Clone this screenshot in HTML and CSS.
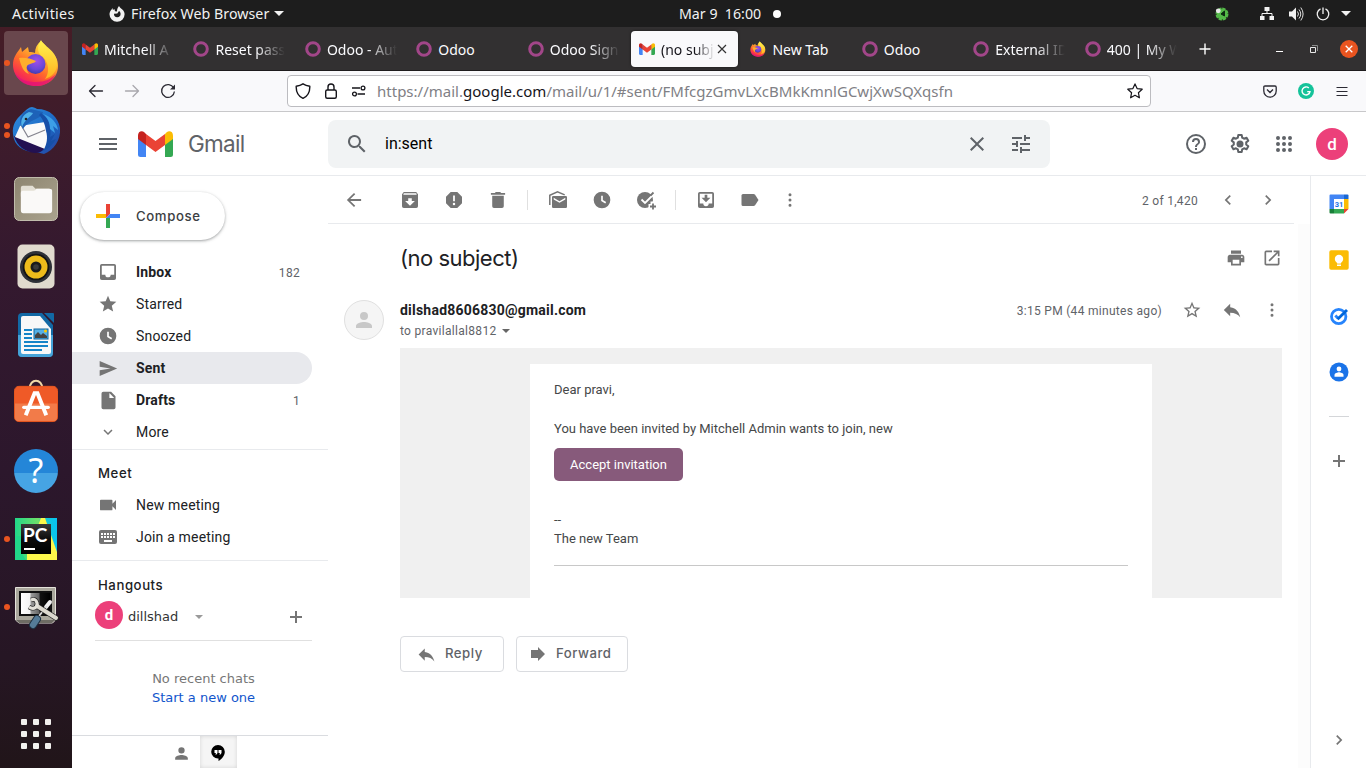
FILE: index.html
```html
<!DOCTYPE html>
<html lang="en">
<head>
<meta charset="utf-8">
<title>(no subject) - Gmail</title>
<link rel="stylesheet" href="styles.css">
</head>
<body>
<svg class="sprite" aria-hidden="true">
  <defs>
    <linearGradient id="ffBody" x1="0.85" y1="0.05" x2="0.25" y2="1">
      <stop offset="0" stop-color="#fff04f"/><stop offset=".3" stop-color="#ffb52e"/><stop offset=".6" stop-color="#ff6a2b"/><stop offset=".85" stop-color="#f9304e"/><stop offset="1" stop-color="#e01c7c"/>
    </linearGradient>
    <radialGradient id="ffGlobe" cx=".55" cy=".35" r=".7">
      <stop offset="0" stop-color="#a24ee8"/><stop offset=".6" stop-color="#6a48d8"/><stop offset="1" stop-color="#3a3aa8"/>
    </radialGradient>
    <linearGradient id="ffTop" x1="0" y1="0" x2="0" y2="1"><stop offset="0" stop-color="#fff34f"/><stop offset="1" stop-color="#ffb21f"/></linearGradient>
    <linearGradient id="tbBlue" x1="0" y1="0" x2="1" y2="1"><stop offset="0" stop-color="#2f8fe0"/><stop offset=".6" stop-color="#1c68c4"/><stop offset="1" stop-color="#27409c"/></linearGradient>
    <linearGradient id="tan" x1="0" y1="0" x2="1" y2="1"><stop offset="0" stop-color="#8d8570"/><stop offset="1" stop-color="#aaa38e"/></linearGradient>
    <linearGradient id="pcBg" x1="0" y1="0" x2="1" y2="0"><stop offset="0" stop-color="#21d789"/><stop offset=".55" stop-color="#6fe16a"/><stop offset=".75" stop-color="#12c9d8"/><stop offset="1" stop-color="#07c3f2"/></linearGradient>
    <linearGradient id="pcDark" x1="0" y1="0" x2="0" y2="1"><stop offset="0" stop-color="#3a3a3a"/><stop offset=".5" stop-color="#0c0c0c"/><stop offset="1" stop-color="#000"/></linearGradient>
    <linearGradient id="mono" x1="0" y1="0" x2="1" y2="0"><stop offset="0" stop-color="#fff"/><stop offset=".3" stop-color="#f4f4f4"/><stop offset=".36" stop-color="#999"/><stop offset=".62" stop-color="#666"/><stop offset=".66" stop-color="#111"/><stop offset="1" stop-color="#000"/></linearGradient>
  </defs>
  <symbol id="firefox" viewBox="0 0 48 48">
    <path fill="url(#ffBody)" d="M29 2c5 4 7 8 9 11 6 3 8 8 8 14 0 12-10 20-22 20S1 38 1 26C1 19 4 15 7 11l2-3 1 5c2-2 4-3 6-5l1 5c3 0 4 0 6 1 0-5 2-9 6-12z"/>
    <path fill="#e2127a" d="M3 34c5 7 12 9 21 9 9 0 15-3 20-8-4 8-11 12-20 12S6 43 3 34z" opacity=".75"/>
    <path fill="url(#ffTop)" d="M29 1c2 6 15 10 16 22 1 10-6 15-12 17 4-5 5-15-2-22-5-3-7-9-2-17z"/>
    <circle cx="23.500" cy="25" r="10" fill="url(#ffGlobe)"/>
    <path fill="#ffad2d" d="M7 19c4-1 12 0 17 3-2 3-7 2-9 5-1 2 0 5 2 8-6-2-8-9-10-16z"/>
  </symbol>
  <symbol id="ffmono" viewBox="0 0 16 16"><path fill="#f2f2f2" fill-rule="evenodd" d="M10 0c.6 1.500 2.200 2.400 3.300 3.600C14.800 5 15.600 6.500 15.600 8.300A7.500 7.500 0 0 1 8 15.800 7.500 7.500 0 0 1 .5 8.300C.5 6.300 1.300 4.700 2.600 3.400L3.400 2l.5 2 1.500-.9L6 5.200l2 .3C8 3.500 8.700 1.400 10 0zM5 7.800a3.300 3.300 0 0 0 6.600.3c0-1.300-.6-2.300-1.600-3L8.300 7.400z"/></symbol>
  <symbol id="gmail" viewBox="0 0 35 26">
    <path fill="#4285f4" d="M0 5h8v21H2.500A2.500 2.500 0 0 1 0 23.500z"/>
    <path fill="#34a853" d="M27 5h8v18.500a2.500 2.500 0 0 1-2.500 2.500H27z"/>
    <path fill="#fbbc04" d="M27 3l1.500-1.500C31-1 35 .2 35 4.500v3.500l-8 6z"/>
    <path fill="#ea4335" d="M8 14V3l9.500 7L27 3v11l-9.500 7z"/>
    <path fill="#c5221f" d="M0 4.500C0 .2 4-1 6.500 1.500L8 3v11L0 8z"/>
  </symbol>
  <symbol id="ring" viewBox="0 0 16 16"><circle cx="8" cy="8" r="6.300" fill="none" stroke="#a24689" stroke-width="3"/></symbol>
  <symbol id="back" viewBox="0 0 16 16"><path fill="none" stroke="currentColor" stroke-width="1.300" stroke-linecap="round" stroke-linejoin="round" d="M14.500 8H1.500M7 2.500L1.500 8 7 13.500"/></symbol>
  <symbol id="star" viewBox="0 0 24 24"><path fill="currentColor" d="M12 17.270L18.180 21l-1.640-7.030L22 9.240l-7.190-.61L12 2 9.190 8.630 2 9.240l5.460 4.730L5.820 21z"/></symbol>
  <symbol id="clock" viewBox="0 0 24 24"><path fill="currentColor" fill-rule="evenodd" d="M12 2a10 10 0 1 0 0 20 10 10 0 0 0 0-20zm-1 5h2v5l4 2.500-1.100 1.700L11 13.200z"/></symbol>
  <symbol id="person" viewBox="0 0 24 24"><path fill="currentColor" d="M12 12a4 4 0 1 0 0-8 4 4 0 0 0 0 8zm0 2c-2.700 0-8 1.300-8 4v2h16v-2c0-2.700-5.300-4-8-4z"/></symbol>
  <symbol id="reply" viewBox="0 0 24 24"><path fill="currentColor" d="M10 9V5l-7 7 7 7v-4.100c5 0 8.500 1.600 11 5.100-1-5-4-10-11-11z"/></symbol>
  <symbol id="dots" viewBox="0 0 24 24"><path fill="currentColor" d="M12 7.600a1.800 1.800 0 1 0 0-3.600 1.800 1.800 0 0 0 0 3.600zm0 2.600a1.800 1.800 0 1 0 0 3.600 1.800 1.800 0 0 0 0-3.600zm0 6.200a1.800 1.800 0 1 0 0 3.600 1.800 1.800 0 0 0 0-3.600z"/></symbol>
  <symbol id="left" viewBox="0 0 24 24"><path fill="currentColor" d="M15.410 7.410L14 6l-6 6 6 6 1.410-1.410L10.830 12z"/></symbol>
  <symbol id="right" viewBox="0 0 24 24"><path fill="currentColor" d="M10 6L8.590 7.410 13.170 12l-4.580 4.590L10 18l6-6z"/></symbol>
  <symbol id="plus" viewBox="0 0 20 20"><path fill="currentColor" d="M16 11h-5v5H9v-5H4V9h5V4h2v5h5z"/></symbol>
</svg>

<header class="topbar">
  <span class="ub activities">Activities</span>
  <span class="app"><svg width="16" height="16"><use href="#ffmono"/></svg><span class="ub appname">Firefox Web Browser</span><i class="tri"></i></span>
  <span class="ub date">Mar 9&nbsp; 16:00</span><i class="dot"></i>
  <div class="status">
    <svg width="14" height="14" viewBox="0 0 14 14"><circle cx="7" cy="7" r="5.300" fill="#54b948" stroke="#54b948" stroke-width="2.400" stroke-dasharray="3.300 .8"/><path d="M6 7l3.500-3v5z" fill="#0d2b12" stroke="#0d2b12"/><circle cx="3.300" cy="3.800" r="2.400" fill="#e8e8e8"/></svg>
    <svg class="s-net" width="16" height="14" viewBox="0 0 16 14"><path fill="#f2f2f2" d="M5.500 0h5v4h-5zM1 9h4.500v4H1zM10.500 9H15v4h-4.500z"/><path d="M8 4v2.500M3 9V6.500h10V9" stroke="#f2f2f2" fill="none"/></svg>
    <svg class="s-vol" width="16" height="16" viewBox="0 0 16 16"><path fill="#f2f2f2" d="M1 5.500h3l4-4v13l-4-4H1z"/><path d="M9.500 5.500q2 2.500 0 5M11 3.500q3.500 4.500 0 9M12.800 1.500q4.600 6.500 0 13" stroke="#ddd" fill="none"/></svg>
    <svg class="s-pow" width="14" height="14" viewBox="0 0 14 14"><path d="M4.500 1.800a5.800 5.800 0 1 0 5 0M7 .5v6.500" stroke="#f2f2f2" stroke-width="1.300" fill="none"/></svg>
    <i class="tri"></i>
  </div>
</header>

<div class="desktop">
<nav class="dock">
  <div class="tile active"><i class="run"></i><svg width="48" height="48"><use href="#firefox"/></svg></div>
  <div class="tile"><i class="run"></i><i class="run second"></i>
    <svg width="50" height="48" viewBox="0 0 50 48"><path fill="url(#tbBlue)" d="M11 7C15 3 18 0 21 0c3 1 4 1 5 2 13 0 21 8 23 19 1 12-6 22-16 26l-8-2C12 45 3 39 2 27 1 18 5 12 11 7z"/><path fill="#231152" d="M3 29l31 12c-2 3-6 5-10 5C14 45 6 39 3 29z"/><path fill="#fafafa" d="M9 19l25-4 4 15-4 12L4 30z"/><path d="M10 18l7 12 17-7" fill="none" stroke="#84848f" stroke-width="1.200"/><path fill="#1d62b8" d="M10 18c-3-7 2-14 10-16l12 3c-2 8-14 7-20 17z"/><path fill="#51b2e8" d="M11 20c-2-6 0-12 7-15l4 1c-2 4-8 6-11 14z"/><circle cx="15" cy="12" r="1.300" fill="#222"/><path fill="#164fa8" d="M30 6c9 6 11 15 9 24l5-3-4 7 5-2c-4 7-8 10-13 12 4-7 5-13 3-20-1-7-3-12-7-16z"/><path fill="#3c9ee6" d="M32 7c9 3 14 9 15 16l-5-4 2 7-5-4c0-6-2-11-7-15z"/></svg></div>
  <div class="tile"><svg width="44" height="44" viewBox="0 0 45 45"><rect x=".5" y=".5" width="44" height="44" rx="5" fill="url(#tan)" stroke="#c4bfae"/><path fill="#e3dfd4" d="M7 11q0-2 2-2h10l3 3h14q2 0 2 2v6H7z"/><path fill="#faf9f8" d="M7 16q0-2 2-2h11q2 0 3-2h13q3 0 3 2v20q0 3-3 3H9.500Q7 37 7 34z"/></svg></div>
  <div class="tile"><svg width="38" height="46" viewBox="0 0 38 46"><rect x=".5" y=".5" width="37" height="44" rx="5" fill="#e0dace"/><circle cx="19" cy="23" r="16" fill="#2e3138"/><circle cx="19" cy="23" r="13.300" fill="#141414"/><circle cx="19" cy="23" r="11.500" fill="#edbb1b"/><circle cx="19" cy="23" r="5.500" fill="#1b1b1b"/><circle cx="19" cy="23" r="2.800" fill="#3a3a3a"/></svg></div>
  <div class="tile"><svg width="38" height="46" viewBox="0 0 38 46"><path fill="#1269a5" d="M5 1h20l11 12v28q0 4-4 4H5q-4 0-4-4V5q0-4 4-4z"/><path fill="#45a3d8" d="M1 23h35v18q0 4-4 4H5q-4 0-4-4z"/><path fill="#1269a5" d="M27 1h9q1 0 1 1v9z"/><path fill="#f8f8f8" d="M6 4h17l11 13v23q0 2-2 2H6q-2 0-2-2V6q0-2 2-2z"/><path stroke="#1584c8" stroke-width="2" d="M7 18h8M7 22h8M7 26h8M7 30h24M7 34h24M7 38h18"/><rect x="17" y="17" width="14" height="10" fill="#55b0e6" stroke="#0f669f"/><path fill="#444" d="M18 26v-3l3-3 3 3 2-2 4 3v2z"/><circle cx="28.500" cy="19" r="1.500" fill="#ffc800"/></svg></div>
  <div class="tile software"><svg width="44" height="45" viewBox="0 0 45 46"><path d="M16 10C16-1 29-1 29 10" fill="none" stroke="#efd9a8" stroke-width="2"/><rect x=".5" y="7.500" width="44" height="36" rx="4.500" fill="#ef5a27" stroke="#e9581f"/><path fill="#f27b49" d="M1 25h43v14q0 4-4 4H5q-4 0-4-4z"/><g stroke="#fff" fill="none"><path d="M12 37l9-22.500h3L33 37" stroke-width="4"/><path d="M10 29h25" stroke-width="3.500" stroke-linecap="round"/></g></svg></div>
  <div class="tile"><span class="helpball">?</span></div>
  <div class="tile"><i class="run"></i><div class="pycharm"><svg width="42" height="42" viewBox="0 0 42 42"><rect width="42" height="42" fill="url(#pcBg)"/><path fill="#fcf84a" d="M26 0h4l12 34v8H12V36L22 10z"/><path fill="#21d789" d="M0 18h7v18l4 6H0z"/><rect x="6" y="6" width="30" height="30" fill="url(#pcDark)"/><path fill="#fff" d="M9 30h11v2H9z"/></svg><span>PC</span></div></div>
  <div class="tile"><i class="run"></i><svg width="46" height="46" viewBox="0 0 46 46"><path fill="#a9a79c" stroke="#e4e2da" d="M2.500 3.500h40V36l-3 3H6l-3.500-3z"/><path fill="#6e6c64" d="M3 36h39l-3 3H6z"/><rect x="6" y="7" width="33" height="25" fill="#111"/><rect x="8" y="9" width="29" height="21" fill="url(#mono)"/><path stroke="#f2f2f2" stroke-width="4" stroke-linecap="round" d="M37 18l-4 5"/><path stroke="#ddd" stroke-width="2" d="M34 22l-8 10"/><path stroke="#222" stroke-width="5.500" stroke-linecap="round" d="M24 22l19 12"/><path fill="none" stroke="#222" stroke-width="4.600" d="M16 23c5 3 9 0 8-4s-3-4-6-3"/><path stroke="#dcd9cf" stroke-width="4" stroke-linecap="round" d="M24 22l19 12"/><path fill="none" stroke="#e4e2da" stroke-width="3.200" d="M16 23c5 3 9 0 8-4s-3-4-6-3"/><path stroke="#1d3042" stroke-width="8" stroke-linecap="round" d="M24 35l-4 6"/><path stroke="#557b98" stroke-width="6" stroke-linecap="round" d="M24 35l-4 6"/></svg></div>
  <div class="apps"><i></i><i></i><i></i><i></i><i></i><i></i><i></i><i></i><i></i></div>
</nav>

<div class="window">
  <div class="tabs">
    <div class="tab"><svg class="fav" viewBox="0 0 35 26"><use href="#gmail"/></svg><span class="ub">Mitchell A</span></div>
    <div class="tab"><svg class="fav"><use href="#ring"/></svg><span class="ub">Reset pass</span></div>
    <div class="tab"><svg class="fav"><use href="#ring"/></svg><span class="ub">Odoo - Aut</span></div>
    <div class="tab"><svg class="fav"><use href="#ring"/></svg><span class="ub short">Odoo</span></div>
    <div class="tab"><svg class="fav"><use href="#ring"/></svg><span class="ub">Odoo Sign</span></div>
    <div class="tab current"><svg class="fav" viewBox="0 0 35 26"><use href="#gmail"/></svg><span class="ub">(no subj</span><svg class="x" width="10" height="10" viewBox="0 0 10 10"><path d="M1 1l8 8M9 1L1 9" stroke="#333" stroke-width="1.200"/></svg></div>
    <div class="tab"><svg class="fav"><use href="#firefox"/></svg><span class="ub short">New Tab</span></div>
    <div class="tab"><svg class="fav"><use href="#ring"/></svg><span class="ub short">Odoo</span></div>
    <div class="tab"><svg class="fav"><use href="#ring"/></svg><span class="ub">External ID</span></div>
    <div class="tab"><svg class="fav"><use href="#ring"/></svg><span class="ub">400 | My W</span></div>
    <svg class="newtab" width="12" height="12" viewBox="0 0 12 12"><path d="M6 .5v11M.5 6h11" stroke="#fff" stroke-width="1.400"/></svg>
    <div class="winctl"><svg width="8" height="9" viewBox="0 0 8 9"><path d="M0 7.500h7" stroke="#fff"/></svg><svg width="8" height="8" viewBox="0 0 8 8"><path fill="none" stroke="#e8e8e8" d="M.5 2.500h5v5h-5z"/><path fill="none" stroke="#8c8c8c" d="M2 .5h5.500V6"/></svg><span class="close"><svg width="8" height="8" viewBox="0 0 8 8"><path d="M.7.7l6.600 6.600M7.300.7L.7 7.300" stroke="#fff" stroke-width="1.300"/></svg></span></div>
  </div>

  <div class="navbar">
    <svg class="n-back" width="16" height="16"><use href="#back"/></svg>
    <svg class="n-fwd" width="16" height="16"><use href="#back"/></svg>
    <svg class="n-reload" width="16" height="16" viewBox="0 0 16 16"><path fill="none" stroke="#2b2a33" stroke-width="1.300" d="M13.700 5A6.400 6.400 0 1 0 14.400 8.500"/><path fill="#2b2a33" d="M15 1.500v5h-5z"/></svg>
    <div class="urlbar">
      <svg width="16" height="16" viewBox="0 0 16 16"><path fill="none" stroke="#15141a" stroke-width="1.400" stroke-linejoin="round" d="M8 .8c2 1.300 4 2 6.800 2.400C15 9 13 13 8 15.300 3 13 1 9 1.200 3.200 4 2.800 6 2.100 8 .8z"/></svg>
      <svg class="u-lock" width="14" height="16" viewBox="0 0 14 16"><rect x="1.700" y="7" width="10.600" height="8.300" rx="1.500" fill="none" stroke="#15141a" stroke-width="1.400"/><path d="M4 7V4a3 3 0 0 1 6 0v3" fill="none" stroke="#15141a" stroke-width="1.400"/></svg>
      <svg class="u-perm" width="16" height="12" viewBox="0 0 16 12"><path stroke="#15141a" stroke-width="1.400" d="M1 3h8M6.500 9H14"/><circle cx="12" cy="3" r="1.900" fill="none" stroke="#15141a" stroke-width="1.300"/><circle cx="3.500" cy="9" r="1.900" fill="none" stroke="#15141a" stroke-width="1.300"/></svg>
      <span class="ub url">https://mail.<b>google.com</b>/mail/u/1/#sent/FMfcgzGmvLXcBMkKmnlGCwjXwSQXqsfn</span>
      <svg class="u-star" width="16" height="16" viewBox="0 0 16 16"><path fill="none" stroke="#15141a" stroke-width="1.200" stroke-linejoin="round" d="M8 .9l2.100 4.700 5.100.6-3.800 3.500 1 5.100L8 12.300l-4.400 2.500 1-5.100L.8 6.200l5.100-.6z"/></svg>
    </div>
    <svg class="n-pocket" width="14" height="13" viewBox="0 0 14 13"><path d="M2 1h10q1.200 0 1.200 1.200V6A6.200 6.200 0 0 1 .8 6V2.200Q.8 1 2 1zM4 4.500l3 3 3-3" fill="none" stroke="#2b2a33" stroke-width="1.300"/></svg>
    <svg class="n-gram" width="16" height="16" viewBox="0 0 16 16"><circle cx="8" cy="8" r="8" fill="#15c39a"/><path d="M10.800 5A4 4 0 1 0 12 8.600H9.200M12 8.600l-1.200 2.600" fill="none" stroke="#fff" stroke-width="1.400"/></svg>
    <svg class="n-menu" width="12" height="11" viewBox="0 0 12 11"><path d="M.5 1.500h11M.5 5.500h11M.5 9.500h11" stroke="#2b2a33"/></svg>
  </div>

  <div class="gmail">
    <div class="ghead">
      <div class="brand"><svg width="24" height="24" viewBox="0 0 24 24"><path fill="#5f6368" d="M3 18h18v-2H3zm0-5h18v-2H3zm0-7v2h18V6z"/></svg><svg class="logo" width="35" height="26"><use href="#gmail"/></svg><span class="gname">Gmail</span></div>
      <div class="search">
        <svg width="24" height="24" viewBox="0 0 24 24"><path fill="#5f6368" d="M15.500 14h-.8l-.3-.3A6.500 6.500 0 1 0 13.700 14.400l.3.300v.8l5 5 1.500-1.500zm-6 0a4.500 4.500 0 1 1 0-9 4.500 4.500 0 0 1 0 9z"/></svg>
        <span class="query">in:sent</span>
        <svg width="24" height="24" viewBox="0 0 24 24"><path fill="#5f6368" d="M19 6.410L17.590 5 12 10.590 6.410 5 5 6.410 10.590 12 5 17.590 6.410 19 12 13.410 17.590 19 19 17.590 13.410 12z"/></svg>
        <svg class="tune" width="24" height="24" viewBox="0 0 24 24"><path fill="#5f6368" d="M3 17v2h6v-2H3zM3 5v2h10V5H3zm10 16v-2h8v-2h-8v-2h-2v6zM7 9v2H3v2h4v2h2V9zm14 4v-2H11v2zm-6-4h2V7h4V5h-4V3h-2z"/></svg>
      </div>
      <div class="gtools">
        <svg width="24" height="24" viewBox="0 0 24 24"><path fill="#5f6368" d="M11 18h2v-2h-2zm1-16a10 10 0 1 0 0 20 10 10 0 0 0 0-20zm0 18a8 8 0 1 1 0-16 8 8 0 0 1 0 16zm0-14a4 4 0 0 0-4 4h2a2 2 0 1 1 4 0c0 2-3 1.750-3 5h2c0-2.250 3-2.500 3-5a4 4 0 0 0-4-4z"/></svg>
        <svg width="24" height="24" viewBox="0 0 24 24"><path fill="none" stroke="#5f6368" stroke-width="2" stroke-linejoin="round" d="M10.300 3h3.400l.5 2.700 1.800 1 2.600-1 1.700 3-2.100 1.700v2.100l2.100 1.800-1.700 3-2.600-1-1.800 1-.5 2.700h-3.400l-.5-2.700-1.800-1-2.600 1-1.700-3 2.100-1.800v-2.100L3.700 8.700l1.700-3 2.600 1 1.800-1z"/><circle cx="12" cy="12" r="3.500" fill="#5f6368"/></svg>
        <svg width="24" height="24" viewBox="0 0 24 24"><path fill="#5f6368" d="M6 8a2 2 0 1 0 0-4 2 2 0 0 0 0 4zm6 12a2 2 0 1 0 0-4 2 2 0 0 0 0 4zm-6 0a2 2 0 1 0 0-4 2 2 0 0 0 0 4zm0-6a2 2 0 1 0 0-4 2 2 0 0 0 0 4zm6 0a2 2 0 1 0 0-4 2 2 0 0 0 0 4zm4-8a2 2 0 1 0 4 0 2 2 0 0 0-4 0zm-4 2a2 2 0 1 0 0-4 2 2 0 0 0 0 4zm6 6a2 2 0 1 0 0-4 2 2 0 0 0 0 4zm0 6a2 2 0 1 0 0-4 2 2 0 0 0 0 4z"/></svg>
        <span class="avatar">d</span>
      </div>
    </div>

    <div class="gbody">
      <aside class="side">
        <div class="compose"><svg width="24" height="24" viewBox="0 0 24 24"><path fill="#ea4335" d="M10 0h4v10l-4 4z"/><path fill="#4285f4" d="M14 10h10v4H10z"/><path fill="#34a853" d="M10 14h4v10h-4z"/><path fill="#fbbc04" d="M0 10h10v4H0z"/></svg><span>Compose</span></div>
        <ul class="nav">
          <li class="bold"><span class="ico"><svg width="22" height="22" viewBox="-.375 -.375 24.750 24.750"><path fill="currentColor" fill-rule="evenodd" d="M5 3h14q2 0 2 2v14q0 2-2 2H5q-2 0-2-2V5q0-2 2-2zm0 2v10h4a3 3 0 0 0 6 0h4V5z"/></svg></span><span>Inbox</span><em>182</em></li>
          <li><span class="ico"><svg width="20" height="20"><use href="#star"/></svg></span><span>Starred</span></li>
          <li><span class="ico"><svg width="20" height="20"><use href="#clock"/></svg></span><span>Snoozed</span></li>
          <li class="bold sel"><span class="ico"><svg width="20" height="21" viewBox="0 0 24 24"><path fill="currentColor" d="M2 21l21-9L2 3v7l13 2-13 2z"/></svg></span><span>Sent</span></li>
          <li class="bold"><span class="ico"><svg width="21" height="21" viewBox="0 0 24 24"><path fill="currentColor" fill-rule="evenodd" d="M6 2h9l5 5v13q0 2-2 2H6q-2 0-2-2V4q0-2 2-2zm7 1.500V9h5.500z"/></svg></span><span>Drafts</span><em>1</em></li>
          <li><span class="ico"><svg width="18" height="18" viewBox="0 0 24 24"><path fill="currentColor" d="M16.590 8.590L12 13.170 7.410 8.590 6 10l6 6 6-6z"/></svg></span><span>More</span></li>
        </ul>
        <section class="meet">
          <h3>Meet</h3>
          <ul class="nav">
            <li><span class="ico"><svg width="22" height="22" viewBox="-.375 -.375 24.750 24.750"><path fill="currentColor" d="M17 10.500V7q0-1-1-1H4Q3 6 3 7v10q0 1 1 1h12q1 0 1-1v-3.500l4 4v-11z"/></svg></span><span>New meeting</span></li>
            <li><span class="ico"><svg width="20" height="18" viewBox="0 0 20 18"><rect x="1" y="2" width="18" height="14" rx="2" fill="currentColor"/><path stroke="#fff" stroke-width="2" stroke-dasharray="2 1" d="M3 6h14M3 9h14"/><path stroke="#fff" stroke-width="2" d="M6 13h8"/></svg></span><span>Join a meeting</span></li>
          </ul>
        </section>
        <section class="hang">
          <h3>Hangouts</h3>
          <div class="user"><span class="avatar small">d</span><span class="uname">dillshad</span><i class="tri grey"></i><svg width="20" height="20"><use href="#plus"/></svg></div>
          <div class="nochats"><span>No recent chats</span><a>Start a new one</a></div>
        </section>
        <div class="sidefoot">
          <svg width="19" height="19"><use href="#person"/></svg>
          <span class="cell"><svg width="14" height="16" viewBox="0 0 14 16"><path fill="#000" d="M7 0a6.800 6.800 0 0 1 6.800 6.800C13.800 10.500 11 14 7.500 16v-2.400H7A6.800 6.800 0 0 1 7 0z"/><path fill="#fff" d="M3.500 5h3v3L5.500 9.500H4.300L5 8H3.500zM7.500 5h3v3L9.500 9.500H8.300L9 8H7.500z"/></svg></span>
        </div>
      </aside>

      <main class="main">
        <div class="toolbar">
          <span class="t"><svg width="22" height="22" viewBox="-.375 -.375 24.750 24.750"><path fill="currentColor" d="M20 11H7.830l5.590-5.590L12 4l-8 8 8 8 1.410-1.410L7.830 13H20z"/></svg></span>
          <span class="t gap"><svg width="22" height="22" viewBox="-.375 -.375 24.750 24.750"><path fill="currentColor" fill-rule="evenodd" d="M5 3h14l2 2.500V19q0 2-2 2H5q-2 0-2-2V5.500zm0 1.500L4.500 6h15L19 4.500zM10 10v3H6.500l5.500 5.500 5.500-5.500H14v-3z"/></svg></span>
          <span class="t"><svg width="22" height="22" viewBox="-.375 -.375 24.750 24.750"><path fill="currentColor" fill-rule="evenodd" d="M8.300 3L3 8.300v7.400L8.300 21h7.400l5.300-5.300V8.300L15.700 3zM11 7h2v6.500h-2zm1 8a1.400 1.400 0 1 1 0 2.800 1.400 1.400 0 0 1 0-2.800z"/></svg></span>
          <span class="t"><svg width="22" height="22" viewBox="-.375 -.375 24.750 24.750"><path fill="currentColor" d="M5.500 7.300h13V19q0 2-2 2h-9q-2 0-2-2zM20 4h-4.500l-1-1h-5l-1 1H4v2h16z"/></svg></span>
          <i class="sep"></i>
          <span class="t"><svg width="20" height="20" viewBox="0 0 20 20"><path fill="currentColor" fill-rule="evenodd" d="M6.500 6h11.300q1.200 0 1.200 1.200v9.600q0 1.200-1.200 1.200H5.200Q4 18 4 16.800V7.200Q4 6 5.200 6zm-.8 1.800v1.700l5.800 3.300 5.800-3.300V7.800l-5.800 3.400z"/><path fill="none" stroke="currentColor" stroke-width="1.500" d="M1.800 15V5.200L9.500 1.900l7.200 3"/></svg></span>
          <span class="t"><svg width="20" height="20"><use href="#clock"/></svg></span>
          <span class="t"><svg width="20" height="20" viewBox="0 0 20 20"><circle cx="9" cy="10" r="8" fill="currentColor"/><path fill="none" stroke="#fff" stroke-width="1.800" d="M5.500 9.500l3.500 3.500 8-8"/><path stroke="#fff" stroke-width="5" d="M17 11.500v9M12.500 16.500h7.500"/><path stroke="currentColor" stroke-width="1.800" d="M14.500 5.500l3-3M17 13.500v6M14 16.500h6"/></svg></span>
          <i class="sep"></i>
          <span class="t"><svg width="22" height="22" viewBox="-.375 -.375 24.750 24.750"><path fill="currentColor" fill-rule="evenodd" d="M5 3h14q2 0 2 2v14q0 2-2 2H5q-2 0-2-2V5q0-2 2-2zm0 2v11h4a3 3 0 0 0 6 0h4V5zm5.500 1h3v3.500H17L12 14.500 7 9.500h3.500z"/></svg></span>
          <span class="t"><svg width="20" height="20" viewBox="0 0 20 20"><path fill="currentColor" d="M3 4h10.500q1 0 1.600.8L18.500 10l-3.400 5.200q-.6.800-1.600.8H3q-1.500 0-1.500-1.500v-9Q1.500 4 3 4z"/></svg></span>
          <span class="t narrow"><svg width="20" height="20"><use href="#dots"/></svg></span>
          <span class="count">2 of 1,420</span>
          <span class="pg"><svg width="20" height="20"><use href="#left"/></svg></span>
          <span class="pg"><svg width="20" height="20"><use href="#right"/></svg></span>
        </div>
        <div class="content">
          <div class="thread">
            <div class="subject"><h2>(no subject)</h2>
              <svg width="20" height="20" viewBox="0 0 24 24"><path fill="currentColor" fill-rule="evenodd" d="M19 8H5a3 3 0 0 0-3 3v6h4v4h12v-4h4v-6a3 3 0 0 0-3-3zm-3 11H8v-5h8zM19 12a1 1 0 1 1 0-2 1 1 0 0 1 0 2zM18 3H6v4h12z"/></svg>
              <svg width="20" height="20" viewBox="0 0 24 24"><path fill="currentColor" d="M19 19H5V5h7V3H5a2 2 0 0 0-2 2v14c0 1.100.9 2 2 2h14a2 2 0 0 0 2-2v-7h-2zM14 3v2h3.590l-9.830 9.830 1.410 1.410L19 6.410V10h2V3z"/></svg>
            </div>
            <div class="from">
              <span class="anon"><svg width="24" height="24"><use href="#person"/></svg></span>
              <div class="who"><b>dilshad8606830@gmail.com</b><span>to pravilallal8812<i class="tri"></i></span></div>
              <span class="when">3:15 PM (44 minutes ago)</span>
              <svg width="20" height="20" viewBox="0 0 24 24"><path fill="currentColor" d="M22 9.240l-7.190-.62L12 2 9.190 8.630 2 9.240l5.460 4.730L5.820 21 12 17.270 18.180 21l-1.630-7.030zM12 15.400l-3.760 2.270 1-4.280-3.320-2.880 4.380-.38L12 6.100l1.710 4.040 4.380.38-3.320 2.880 1 4.280z"/></svg>
              <svg width="20" height="20" viewBox="1 1 22 22"><use href="#reply" width="24" height="24"/></svg>
              <svg width="20" height="20"><use href="#dots"/></svg>
            </div>
            <div class="mail">
              <div class="paper">
                <p>Dear pravi,</p>
                <p class="p2">You have been invited by Mitchell Admin wants to join, new</p>
                <a class="accept">Accept invitation</a>
                <p class="sig">--<br>The new Team</p>
              </div>
            </div>
            <div class="actions"><span class="btn reply"><svg width="21" height="21"><use href="#reply"/></svg>Reply</span><span class="btn fwd"><svg width="16" height="16" viewBox="0 0 16 16"><path fill="currentColor" d="M1 4h7V1l7 7-7 7v-3H1z"/></svg>Forward</span></div>
          </div>
        </div>
      </main>

      <aside class="addons">
        <svg width="20" height="20" viewBox="0 0 20 20"><path fill="#4285f4" d="M1.500.5H15V5H5v10H.5V1.500q0-1 1-1z"/><path fill="#1967d2" d="M15 .5h3.500q1 0 1 1V5H15z"/><path fill="#fbbc04" d="M15 5h4.500v10H15z"/><path fill="#34a853" d="M5 15h10v4.500H5z"/><path fill="#188038" d="M.5 15H5v4.500H1.500q-1 0-1-1z"/><path fill="#ea4335" d="M15 15h4.500L15 19.500z"/><path fill="#fff" d="M5 5h10v10H5z"/><text x="10" y="13.300" text-anchor="middle" class="cal">31</text></svg>
        <svg width="20" height="20" viewBox="0 0 20 20"><rect x=".3" y=".3" width="19.400" height="19.400" rx="1.800" fill="#fbbc04"/><circle cx="10" cy="9" r="4.200" fill="#fff"/><path fill="#fff" d="M8 11h4v2.500H8zM8 14.500h4V16H8z"/></svg>
        <svg width="20" height="20" viewBox="0 0 20 20"><circle cx="9.700" cy="10.500" r="7.200" fill="none" stroke="#2684fc" stroke-width="2.800"/><path d="M6.300 9.500l3 3" stroke="#2684fc" stroke-width="2.800" fill="none"/><path d="M8.600 13.200L18 4" stroke="#0066da" stroke-width="2.800"/></svg>
        <svg width="20" height="20" viewBox="0 0 20 20"><circle cx="10" cy="10" r="9.500" fill="#1a73e8"/><circle cx="10" cy="7" r="2.400" fill="#fff"/><path fill="#fff" d="M5.500 14.800V13c0-1.800 3-2.700 4.500-2.700s4.500.9 4.500 2.700v1.800z"/></svg>
        <i class="rule"></i>
        <svg class="add" width="20" height="20"><use href="#plus"/></svg>
        <svg class="expand" width="20" height="20"><use href="#right"/></svg>
      </aside>
    </div>
  </div>
</div>
</div>
</body>
</html>
```
FILE: styles.css
```css
* { box-sizing: border-box; }
body { margin: 0; width: 1366px; height: 768px; overflow: hidden; background: #fff; font-family: Roboto, "Liberation Sans", sans-serif; color: #202124; display: flex; flex-direction: column; }
ul, h2, h3, p { margin: 0; padding: 0; list-style: none; font-weight: 400; }
svg { display: block; flex: none; }
.sprite { position: absolute; width: 0; height: 0; }
.ub { font-family: "Noto Sans", "Open Sans", sans-serif; white-space: nowrap; }
.tri { width: 0; height: 0; border: 5px solid transparent; border-top-color: #f2f2f2; border-bottom: 0; flex: none; }

/* desktop top bar */
.topbar { height: 27px; background: #1d1d1d; color: #f2f2f2; font-size: 14.200px; line-height: 27px; display: flex; align-items: center; flex: none; }
.activities { width: 97px; padding-left: 12px; letter-spacing: .35px; }
.app { display: flex; align-items: center; width: 582px; padding-left: 12px; }
.appname { margin: 0 5px 0 6px; letter-spacing: .06px; }
.date { width: 94px; }
.dot { width: 8px; height: 8px; border-radius: 50%; background: #fff; }
.status { display: flex; align-items: center; margin-left: 434px; }
.s-net { margin-left: 30px; }
.s-vol { margin-left: 13px; }
.s-pow { margin: 0 11px 0 12px; }

.desktop { display: flex; flex: 1; min-height: 0; }

/* launcher */
.dock { width: 72px; background: linear-gradient(#451c26, #3f1c2b 12%, #34192f 32%, #2c172c 60%, #261624 85%, #211519); padding: 4px; display: flex; flex-direction: column; gap: 4px; flex: none; }
.tile { height: 64px; display: flex; align-items: center; justify-content: center; position: relative; border-radius: 4px; flex: none; }
.tile.active { background: #69474d; }
.software { padding-bottom: 3px; }
.run { position: absolute; left: 0; top: 29px; width: 6px; height: 6px; border-radius: 50%; background: #e95420; }
.tile:nth-child(2) .run { top: 24px; }
.tile:nth-child(2) .run.second { top: 33px; }
.helpball { width: 44px; height: 44px; border-radius: 50%; background: linear-gradient(#2486d8 55%, #46a4e4 55%); color: #fff; font: 34px/43px "Noto Sans", sans-serif; text-align: center; }
.pycharm { position: relative; }
.pycharm span { position: absolute; left: 8px; top: 7px; font: 700 19px/20px Lato, sans-serif; color: #fff; }
.apps { display: grid; grid-template-columns: repeat(3, 6px); gap: 6px; margin: auto auto 15px 17px; }
.apps i { width: 6px; height: 6px; border-radius: 1px; background: #f2f0ee; }

/* browser chrome */
.window { flex: 1; min-width: 0; display: flex; flex-direction: column; }
.tabs { height: 44px; background: #323031; border-bottom: 1px solid #1e1c1d; display: flex; align-items: center; padding-left: 1px; flex: none; }
.tab { width: 111.450px; height: 36px; display: flex; align-items: center; padding-left: 9px; color: #fbfbfe; font-size: 14px; flex: none; margin-top: 1px; }
.fav { width: 16px; height: 16px; margin-right: 6px; }
.tab .ub { width: 70px; -webkit-mask-image: linear-gradient(90deg, #000 58%, transparent 100%); mask-image: linear-gradient(90deg, #000 58%, transparent 100%); }
.tab .ub.short { -webkit-mask-image: none; mask-image: none; }
.tab.current { background: #f9f9fb; color: #15141a; border-radius: 4px; width: 107px; margin: 1px 3.450px 0 .8px; padding-left: 8px; box-shadow: 0 0 3px #0008; }
.tab.current .ub { width: 54px; -webkit-mask-image: linear-gradient(90deg, #000 62%, transparent 100%); mask-image: linear-gradient(90deg, #000 62%, transparent 100%); }
.x { margin-left: 2px; }
.newtab { margin-left: 12px; }
.winctl { display: flex; align-items: center; margin-left: 65px; gap: 26px; }
.close { width: 18px; height: 18px; border-radius: 50%; background: #e95420; display: flex; align-items: center; justify-content: center; margin-left: -4px; }
.navbar { height: 41px; background: #f9f9fb; border-bottom: 1px solid #c8c8ca; display: flex; align-items: center; padding-left: 16px; flex: none; }
.n-back { color: #2b2a33; }
.n-fwd { color: #a9a8ad; transform: scaleX(-1); margin: 0 20px; }
.urlbar { width: 864px; height: 32px; margin-left: 111px; border: 1px solid #bcbcc0; border-radius: 4px; background: #fff; display: flex; align-items: center; padding-left: 7px; }
.u-lock { margin-left: 13px; }
.u-perm { margin: 0 9px 0 13px; }
.url { color: #808085; font-size: 15px; letter-spacing: .01px; width: 738px; padding-left: 1px; }
.url b { font-weight: 400; color: #15141a; }
.u-star { margin-left: 13px; }
.n-pocket { margin-left: 112px; }
.n-gram { margin: 0 22px 0 21px; }

/* mail header */
.gmail { flex: 1; min-height: 0; display: flex; flex-direction: column; background: #fff; }
.ghead { height: 64px; border-bottom: 1px solid #e8eaed; display: flex; align-items: center; flex: none; }
.brand { width: 256px; display: flex; align-items: center; padding-left: 24px; }
.logo { margin: 0 15px 0 18px; }
.gname { font: 22.500px/30px Inter, sans-serif; color: #5f6368; letter-spacing: -.7px; }
.search { width: 722px; height: 48px; border-radius: 8px; background: #f1f3f4; display: flex; align-items: center; padding: 0 17px; }
.query { flex: 1; padding-left: 16px; font: 16px/24px Roboto, sans-serif; color: #000; }
.tune { margin-left: 20px; }
.gtools { display: flex; align-items: center; gap: 20px; margin-left: 134px; }
.avatar { width: 32px; height: 32px; border-radius: 50%; background: #ec407a; color: #fff; font: 500 17px/32px Roboto, sans-serif; text-align: center; }
.gtools .avatar { margin-right: -4px; }

.gbody { flex: 1; min-height: 0; display: flex; }

/* folders */
.side { width: 256px; display: flex; flex-direction: column; flex: none; }
.compose { width: 145px; height: 48px; margin: 16px 0 16px 8px; border-radius: 24px; box-shadow: 0 1px 2px #3c40434d, 0 1px 3px 1px #3c404326; display: flex; align-items: center; padding-left: 16px; flex: none; }
.compose span { margin-left: 16px; font: 500 13.200px/20px Inter, sans-serif; color: #3c4043; letter-spacing: .6px; }
.nav li { height: 32px; width: 240px; display: flex; align-items: center; padding: 0 12px 0 26px; font-size: 14px; color: #202124; }
.nav li > span:nth-child(2) { margin-left: 18px; letter-spacing: .17px; }
.ico { width: 20px; height: 20px; display: flex; align-items: center; justify-content: center; color: #757575; }
.nav em { margin-left: auto; font-style: normal; font-weight: 400; font-size: 12px; line-height: 18px; padding-top: 1px; color: #5f6368; letter-spacing: .3px; }
.nav .bold { font-weight: 700; }
.nav .sel { background: #e8e9ed; border-radius: 0 16px 16px 0; }
.meet { margin-top: 1px; border-top: 1px solid #e8eaed; height: 111px; flex: none; }
h3 { font: 500 13.200px/18px Inter, sans-serif; color: #202124; letter-spacing: .55px; padding: 14px 0 7px 26px; }
.hang { border-top: 1px solid #e8eaed; flex: 1; }
.hang h3 { padding: 15px 0 6px 26px; }
.user { margin: 1px 16px 0 23px; height: 40px; border-bottom: 1px solid #e0e0e0; display: flex; align-items: flex-start; }
.avatar.small { width: 28px; height: 28px; font: 700 15px/29px Roboto, sans-serif; }
.uname { font: 13px/31px "DejaVu Sans", sans-serif; color: #333; margin-left: 5px; width: 67px; }
.tri.grey { border-width: 4px 4px 0; border-top-color: #9a9a9a; margin-top: 14px; }
.user svg { color: #757575; margin: 6px 0 0 83px; }
.nochats { display: flex; flex-direction: column; align-items: center; font: 13px/19px "DejaVu Sans", sans-serif; color: #777; padding: 28px 0 0 7px; }
.nochats a { color: #1155cc; }
.sidefoot { height: 33px; border-top: 1px solid #dadce0; display: flex; align-items: center; padding-left: 100px; color: #757575; }
.sidefoot > svg { margin-top: 2px; }
.cell { width: 37px; height: 32px; background: #f5f5f5; box-shadow: inset 0 0 4px #0002; margin-left: 9px; display: flex; align-items: center; justify-content: center; padding: 1px 1px 0 0; }

/* message pane */
.main { width: 982px; display: flex; flex-direction: column; color: #757575; flex: none; }
.toolbar { height: 48px; width: 966px; border-bottom: 1px solid #e8eaed; display: flex; align-items: center; padding: 1px 0 0 4px; flex: none; }
.t { width: 44px; display: flex; justify-content: center; }
.t.gap { margin-left: 12px; }
.t.narrow { width: 36px; }
.sep { width: 1px; height: 20px; background: #e0e0e0; margin: 0 8px 0 7px; }
.count { margin-left: auto; font-size: 12px; line-height: 18px; padding-top: 1px; letter-spacing: .3px; color: #5f6368; margin-right: 10px; }
.pg { width: 40px; display: flex; justify-content: center; }
.pg:last-child { margin-right: 6px; }
.content { flex: 1; border-right: 12px solid #fcfcfc; }
.thread { padding-left: 16px; width: 954px; }
.subject { height: 68px; display: flex; align-items: center; padding: 0 0 0 56px; gap: 16px; }
.subject h2 { flex: 1; font: 22px/28px Inter, sans-serif; letter-spacing: -.5px; color: #202124; }
.from { height: 56px; display: flex; align-items: flex-start; padding-top: 8px; }
.anon { width: 40px; height: 40px; border-radius: 50%; border: 1px solid #e0e0e0; background: #f5f5f5; color: #c8c8c8; display: flex; align-items: center; justify-content: center; margin-right: 16px; }
.who { flex: 1; display: flex; flex-direction: column; font-size: 12px; line-height: 20px; letter-spacing: .3px; color: #5f6368; }
.who b { font-size: 14px; letter-spacing: .22px; color: #202124; }
.who span { display: flex; align-items: center; padding-top: 1px; }
.who .tri { border-width: 4px 4px 0; border-top-color: #666; margin: -1px 0 0 6px; }
.when { font-size: 12px; line-height: 20px; padding-top: 1px; letter-spacing: .3px; color: #5f6368; }
.from > svg { margin-left: 20px; }
.mail { margin-left: 56px; width: 882px; height: 250px; background: #f0f0f0; padding: 16px 130px 0; }
.paper { height: 234px; background: #fff; padding: 16px 24px 0; font-size: 13px; line-height: 19.500px; color: #454748; }
.p2 { margin-top: 19.500px; }
.accept { display: block; width: 129px; height: 33px; margin-top: 9px; background: #875a7b; border-radius: 5px; color: #fff; line-height: 33px; text-align: center; }
.sig { margin-top: 29px; padding-bottom: 16px; border-bottom: 1px solid #c8c8c8; }
.actions { margin: 38px 0 0 56px; display: flex; gap: 12px; }
.btn { height: 36px; border: 1px solid #dadce0; border-radius: 4px; display: flex; align-items: center; font: 500 13.200px/20px Inter, sans-serif; letter-spacing: .5px; color: #5f6368; padding-bottom: 2px; }
.btn svg { color: #757575; margin-top: 2px; }
.reply { width: 104px; padding-left: 15px; gap: 8px; }
.fwd { width: 112px; padding-left: 13px; gap: 10px; }

/* add-on rail */
.addons { width: 56px; border-left: 1px solid #e8eaed; display: flex; flex-direction: column; align-items: center; gap: 36px; padding: 18px 0; color: #757575; flex: none; }
.rule { width: 20px; height: 1px; background: #d4d6d9; margin-top: -2px; }
.add { margin-top: -2px; }
.expand { margin-top: auto; }
.cal { font: 700 7.500px Roboto, sans-serif; fill: #1a73e8; }
```
